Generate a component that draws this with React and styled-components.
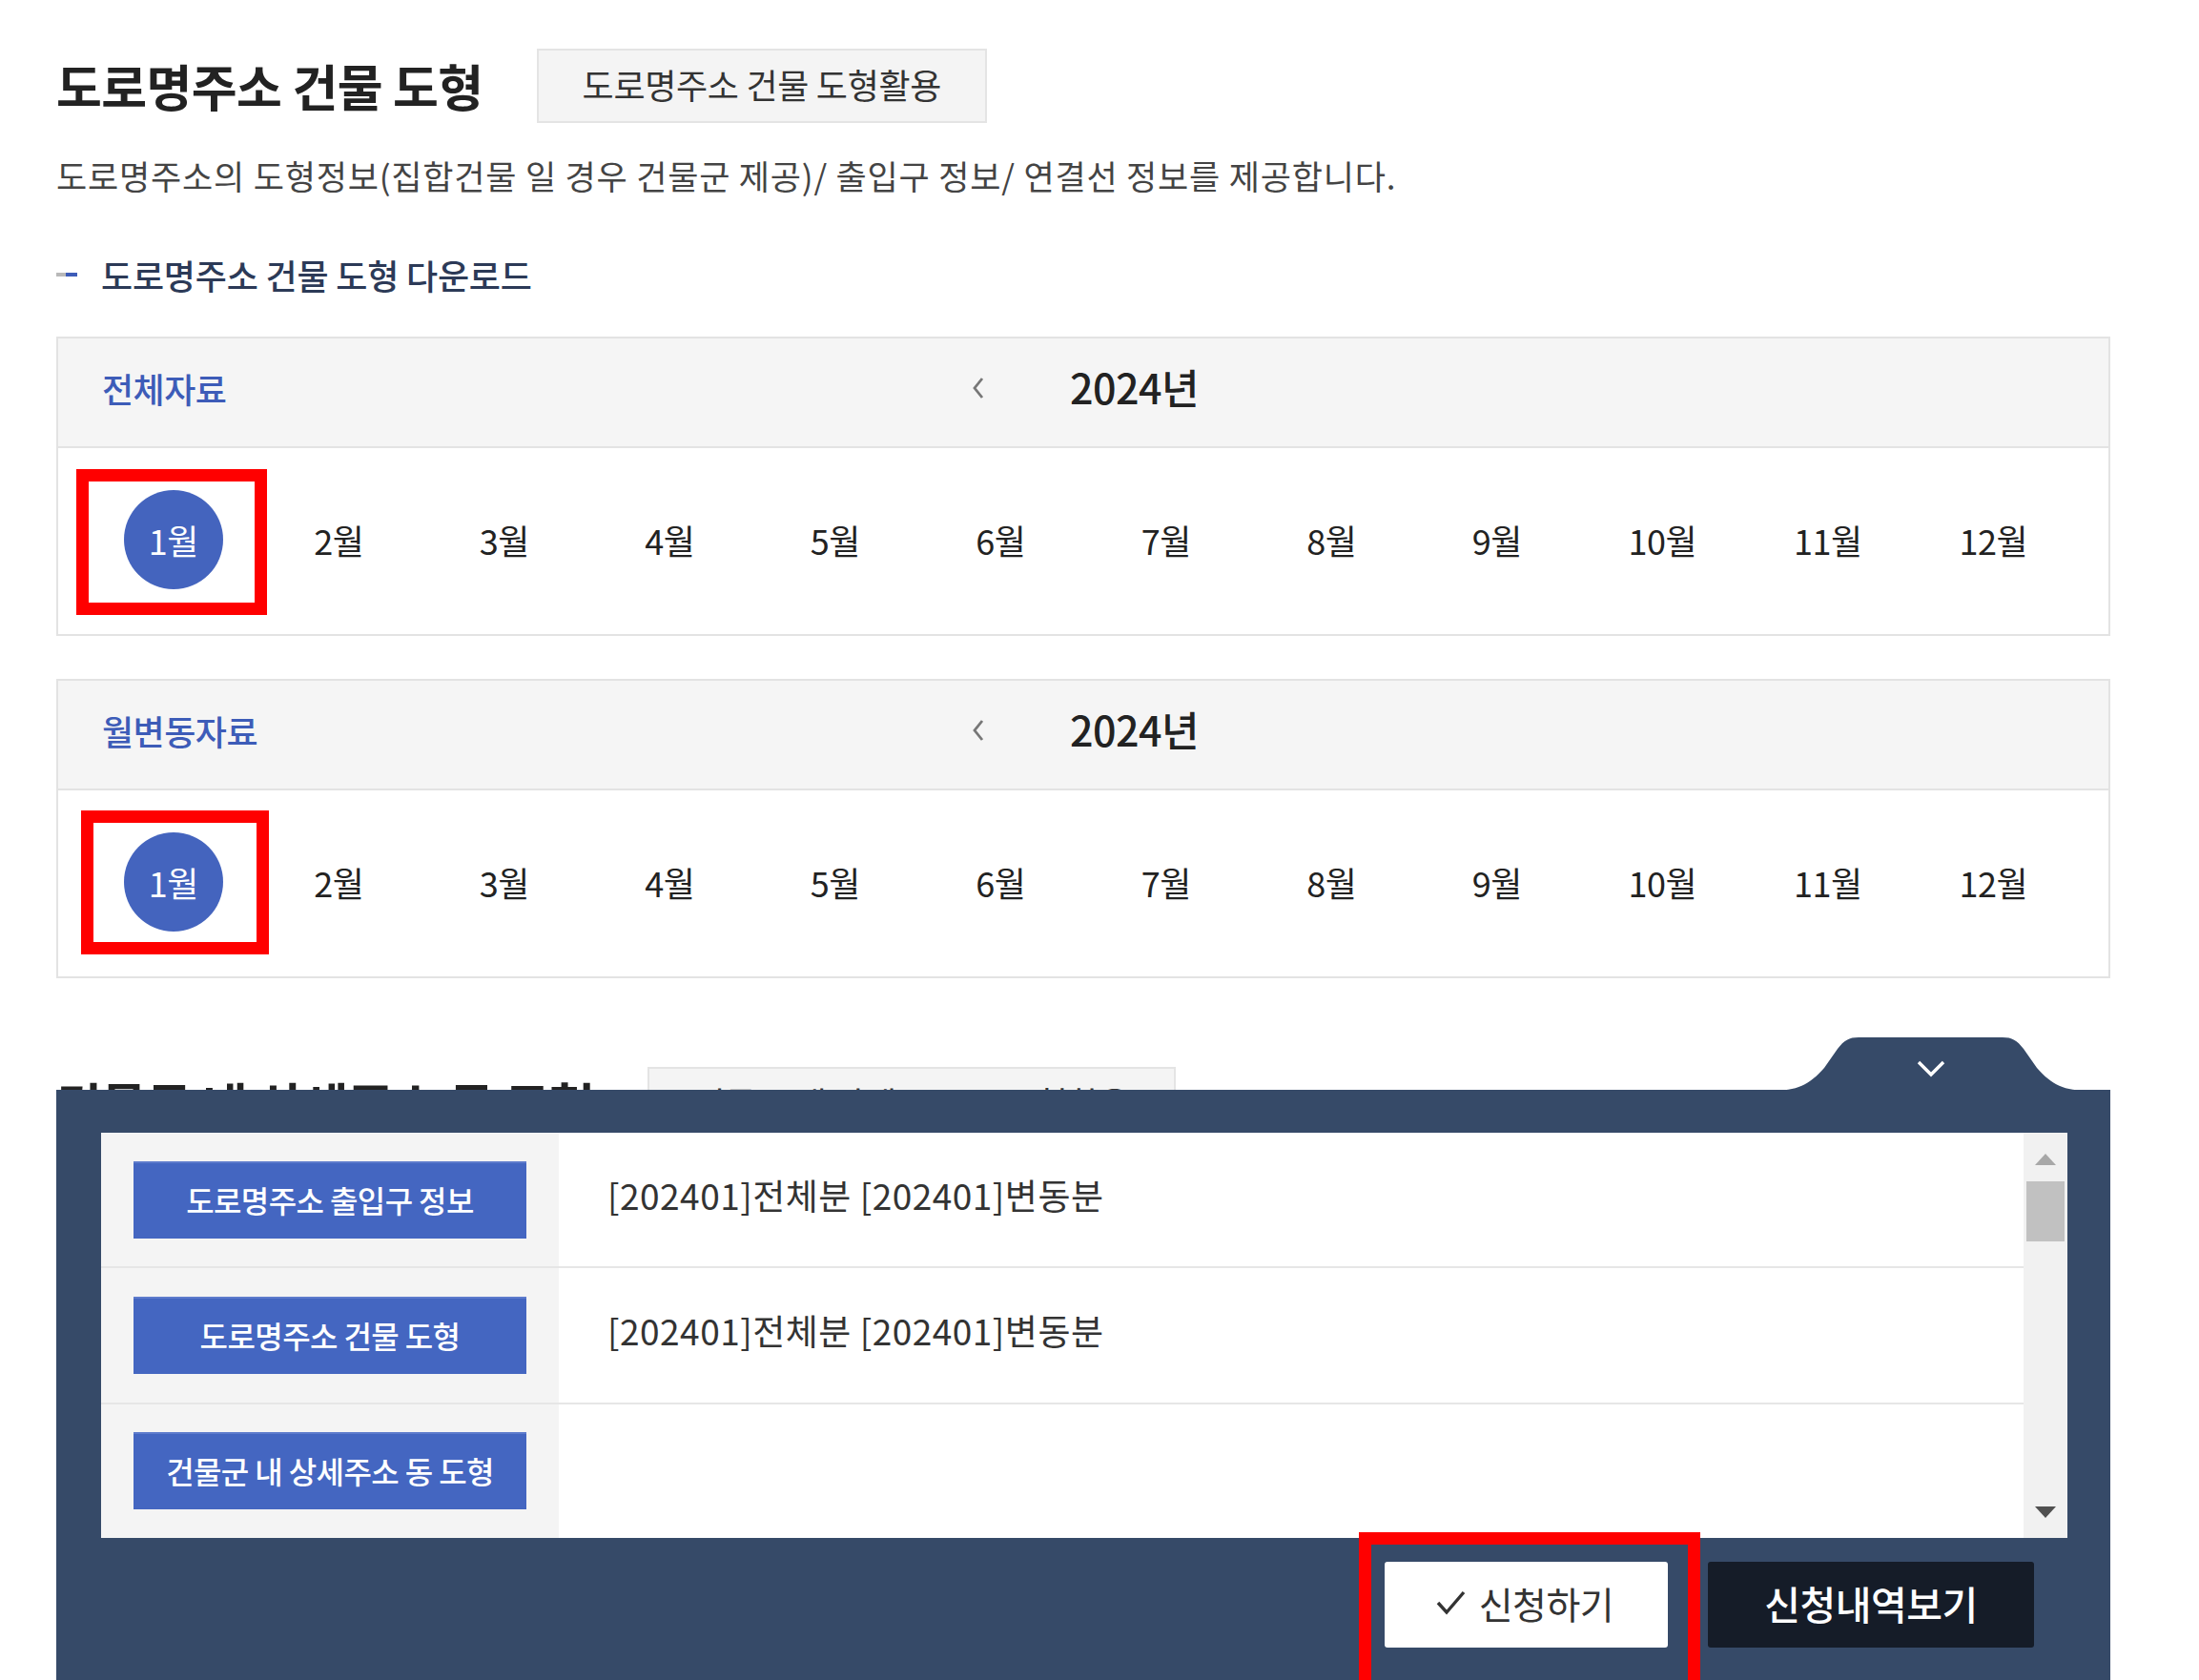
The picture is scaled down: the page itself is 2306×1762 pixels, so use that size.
import React from "react";
import styled, { createGlobalStyle } from "styled-components";

// 도로명주소 건물 도형 다운로드 화면

const months = ["1월", "2월", "3월", "4월", "5월", "6월", "7월", "8월", "9월", "10월", "11월", "12월"];

const files = [
  { name: "도로명주소 출입구 정보", info: "[202401]전체분 [202401]변동분" },
  { name: "도로명주소 건물 도형", info: "[202401]전체분 [202401]변동분" },
  { name: "건물군 내 상세주소 동 도형", info: "" },
];

const GlobalStyle = createGlobalStyle`
  html, body {
    margin: 0;
    padding: 0;
    background: #ffffff;
  }
  body {
    font-family: "Noto Sans CJK KR", "Noto Sans", sans-serif;
    color: #222222;
    overflow: hidden;
  }
  * {
    box-sizing: border-box;
  }
`;

const MonthPanel = ({ label, gap, frame }) => {
  return (
    <Panel $gap={gap}>
      <PanelHeader>
        <PanelLabel>{label}</PanelLabel>
        <PrevBtn>
          <svg width="16" height="30" viewBox="0 0 16 30">
            <polyline points="12,5 4,15 12,25" fill="none" stroke="#777777" strokeWidth="2.8" />
          </svg>
        </PrevBtn>
        <Year>2024년</Year>
      </PanelHeader>
      <MonthGrid>
        {months.map((m, i) => (
          <MonthCell key={m}>
            {i === 0 ? (
              <Marked>
                <MonthCircle>{m}</MonthCircle>
                <RedFrame $top={frame[0]} $right={frame[1]} $bottom={frame[2]} $left={frame[3]} />
              </Marked>
            ) : (
              <MonthText>{m}</MonthText>
            )}
          </MonthCell>
        ))}
      </MonthGrid>
    </Panel>
  );
};

const App = () => {
  return (
    <Page>
      <GlobalStyle />
      <TitleRow>
        <Title>도로명주소 건물 도형</Title>
        <GrayBtn>도로명주소 건물 도형활용</GrayBtn>
      </TitleRow>
      <Desc>도로명주소의 도형정보(집합건물 일 경우 건물군 제공)/ 출입구 정보/ 연결선 정보를 제공합니다.</Desc>
      <SubTitle>
        <Bullet>
          <i />
          <b />
        </Bullet>
        도로명주소 건물 도형 다운로드
      </SubTitle>
      <MonthPanel label="전체자료" gap={45} frame={[-22, -46, -27, -50]} />
      <MonthPanel label="월변동자료" gap={45} frame={[-23, -48, -24, -45]} />
      <TitleRow $next>
        <Title>건물군 내 상세주소 동 도형</Title>
        <GrayBtn>건물군 내 상세주소 동 도형활용</GrayBtn>
      </TitleRow>

      <Drawer>
        <DrawerTab>
          <svg width="335" height="56" viewBox="0 0 335 56">
            <path
              d="M0,56 C28,56 40,50 56,32 L70,12 C77,3 82,0 92,0 L243,0 C253,0 258,3 265,12 L279,32 C295,50 307,56 335,56 Z"
              fill="#364a68"
            />
            <polyline points="155,26 168,39 181,26" fill="none" stroke="#ffffff" strokeWidth="3.4" />
          </svg>
        </DrawerTab>
        <ListBox>
          <Rows>
            {files.map((f) => (
              <Row key={f.name}>
                <RowHead>
                  <BlueBtn>{f.name}</BlueBtn>
                </RowHead>
                <RowInfo>{f.info}</RowInfo>
              </Row>
            ))}
          </Rows>
          <ScrollBar>
            <Arrow $up />
            <Thumb />
            <Track />
            <Arrow />
          </ScrollBar>
        </ListBox>
        <ActionRow>
          <Marked>
            <ApplyBtn>
              <svg width="34" height="30" viewBox="0 0 34 30">
                <polyline points="3,15 12,25 30,4" fill="none" stroke="#333333" strokeWidth="3.4" />
              </svg>
              신청하기
            </ApplyBtn>
            <RedFrame $top={-31} $left={-27} $right={-34} $bottom={-60} />
          </Marked>
          <HistoryBtn>신청내역보기</HistoryBtn>
        </ActionRow>
      </Drawer>
    </Page>
  );
};

const Page = styled.div`
  width: 2306px;
  height: 1762px;
  padding: 51px 93px 0 59px;
`;

const TitleRow = styled.div`
  display: flex;
  align-items: center;
  height: 78px;
  margin-top: ${(p) => (p.$next ? "93px" : "0")};
`;

const Title = styled.h2`
  margin: 0 56px 0 0;
  font-size: 52px;
  font-weight: 700;
  letter-spacing: -0.6px;
  color: #222222;
  line-height: 1;
`;

const GrayBtn = styled.div`
  height: 78px;
  padding: 0 46px 4px;
  display: flex;
  align-items: center;
  background: #f4f4f4;
  border: 2px solid #e4e4e4;
  font-size: 36px;
  color: #333333;
  letter-spacing: -0.3px;
`;

const Desc = styled.p`
  margin: 35px 0 0;
  font-size: 35px;
  line-height: 40px;
  color: #444444;
  letter-spacing: 0.8px;
`;

const SubTitle = styled.h3`
  display: flex;
  align-items: center;
  margin: 64px 0 0;
  font-size: 36px;
  line-height: 40px;
  font-weight: 500;
  color: #2c3a57;
  letter-spacing: -0.2px;
`;

const Bullet = styled.span`
  display: flex;
  width: 22px;
  height: 4px;
  margin-right: 25px;

  i {
    width: 10px;
    background: #b9b9b9;
  }
  b {
    width: 12px;
    background: #3d5cb8;
  }
`;

const Panel = styled.div`
  margin-top: ${(p) => p.$gap}px;
  border: 2px solid #e3e3e3;
  background: #ffffff;
`;

const PanelHeader = styled.div`
  display: flex;
  align-items: center;
  height: 115px;
  padding: 0 0 13px 46px;
  background: #f5f5f5;
  border-bottom: 2px solid #e3e3e3;
`;

const PanelLabel = styled.div`
  width: 911px;
  padding-top: 4px;
  font-size: 36px;
  font-weight: 500;
  color: #3d5cb8;
  letter-spacing: -0.5px;
`;

const PrevBtn = styled.div`
  display: flex;
  align-items: center;
  width: 16px;
  margin-right: 88px;
  padding-top: 4px;
`;

const Year = styled.div`
  font-size: 43px;
  font-weight: 500;
  color: #222222;
  letter-spacing: -0.5px;
`;

const MonthGrid = styled.div`
  display: grid;
  grid-template-columns: repeat(12, 1fr);
  align-items: center;
  height: 195px;
  padding: 0 34px 4px;
`;

const MonthCell = styled.div`
  display: flex;
  justify-content: center;
  align-items: center;
`;

const MonthText = styled.span`
  font-size: 36px;
  color: #222222;
  letter-spacing: -0.5px;
`;

const Marked = styled.div`
  position: relative;
  display: flex;
`;

const MonthCircle = styled.span`
  display: flex;
  align-items: center;
  justify-content: center;
  width: 104px;
  height: 104px;
  border-radius: 50%;
  background: #4464be;
  color: #ffffff;
  font-size: 36px;
  letter-spacing: -0.5px;
`;

const RedFrame = styled.span`
  position: absolute;
  top: ${(p) => p.$top}px;
  left: ${(p) => p.$left}px;
  right: ${(p) => p.$right}px;
  bottom: ${(p) => p.$bottom}px;
  border: 13px solid #ff0000;
  pointer-events: none;
`;

const Drawer = styled.div`
  position: fixed;
  left: 59px;
  bottom: 0;
  width: 2154px;
  height: 619px;
  padding: 45px 45px 0 47px;
  background: #364a68;
`;

const DrawerTab = styled.div`
  position: absolute;
  top: -55px;
  right: 21px;
  width: 335px;
  height: 56px;

  svg {
    display: block;
  }
`;

const ListBox = styled.div`
  display: flex;
  height: 425px;
  background: #ffffff;
`;

const Rows = styled.div`
  flex: 1;
  display: flex;
  flex-direction: column;
`;

const Row = styled.div`
  flex: 1;
  display: flex;
  border-top: 2px solid #e6e6e6;

  &:first-child {
    border-top: none;
  }
`;

const RowHead = styled.div`
  display: flex;
  align-items: center;
  width: 480px;
  padding-left: 34px;
  background: #f4f4f4;
`;

const BlueBtn = styled.div`
  display: flex;
  align-items: center;
  justify-content: center;
  width: 412px;
  height: 81px;
  padding-bottom: 3px;
  background: #4466c1;
  border-top: 2px solid #5d7bcc;
  color: #ffffff;
  font-size: 32px;
  font-weight: 500;
  letter-spacing: -0.6px;
`;

const RowInfo = styled.div`
  display: flex;
  align-items: center;
  padding: 0 0 10px 51px;
  font-size: 37px;
  color: #333333;
  letter-spacing: 0.5px;
`;

const ScrollBar = styled.div`
  display: flex;
  flex-direction: column;
  align-items: center;
  width: 46px;
  background: #f1f1f1;
  padding: 22px 0 21px;
`;

const Arrow = styled.span`
  width: 0;
  height: 0;
  border-left: 11px solid transparent;
  border-right: 11px solid transparent;
  ${(p) =>
    p.$up
      ? "border-bottom: 12px solid #a8a8a8;"
      : "border-top: 12px solid #505050;"}
`;

const Thumb = styled.span`
  width: 40px;
  height: 63px;
  margin-top: 17px;
  background: #c1c1c1;
`;

const Track = styled.span`
  flex: 1;
`;

const ActionRow = styled.div`
  display: flex;
  justify-content: flex-end;
  gap: 42px;
  margin-top: 25px;
  padding-right: 35px;
`;

const ApplyBtn = styled.div`
  display: flex;
  align-items: center;
  justify-content: center;
  gap: 12px;
  width: 297px;
  height: 90px;
  padding: 0 4px 4px 0;
  background: #ffffff;
  border-radius: 3px;
  font-size: 39px;
  color: #333333;
  letter-spacing: -0.5px;
`;

const HistoryBtn = styled.div`
  display: flex;
  align-items: center;
  justify-content: center;
  width: 342px;
  height: 90px;
  padding-bottom: 4px;
  background: #151c28;
  border-radius: 3px;
  font-size: 41px;
  font-weight: 500;
  color: #ffffff;
  letter-spacing: -0.5px;
`;

export default App;
